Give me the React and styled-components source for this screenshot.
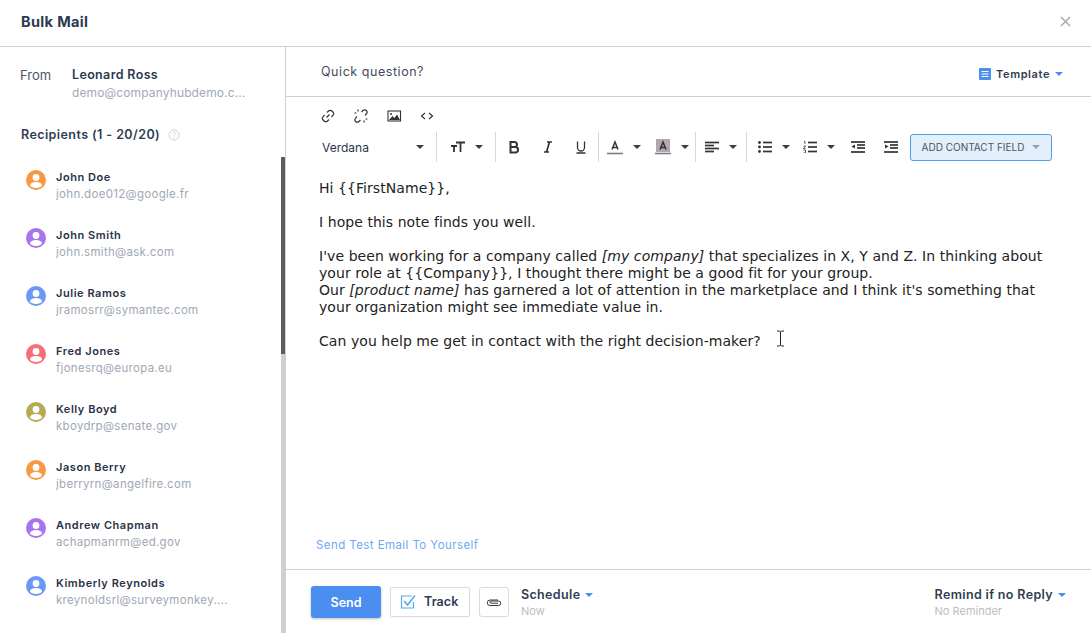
import React from 'react';
import styled, { createGlobalStyle } from 'styled-components';

const Global = createGlobalStyle`
  html, body { margin: 0; padding: 0; background: #fff; height: 100%; overflow: hidden; }
  * { box-sizing: border-box; }
  body { font-family: "Open Sans", "Liberation Sans", sans-serif; color: #2d3a52; }
`;
const Page = styled.div`width: 1091px; height: 633px; display: flex; flex-direction: column; overflow: hidden;`;
const Header = styled.header`
  height: 47px; flex: none; border-bottom: 1px solid #c9d1da; display: flex; align-items: center;
  justify-content: space-between; padding: 0 20px 3px 21px;
`;
const Title = styled.h1`margin: 0; font: 700 14.5px "Inter", sans-serif; color: #2c3a50; letter-spacing: 0.35px;`;
const Close = styled.button`border: 0; background: none; padding: 0; display: flex; color: #a4abb5;`;
const Body = styled.div`flex: 1; display: flex; min-height: 0;`;
const Side = styled.aside`
  width: 286px; flex: none; border-right: 1px solid #c9d1da; position: relative; overflow: hidden;
  padding: 20px 0 0 20px;
`;
const FromRow = styled.div`display: flex; margin-bottom: 25px;`;
const FromLabel = styled.div`width: 52px; font: 400 13px/16px "Inter", sans-serif; color: #4a5565;`;
const NameBlock = styled.div`display: flex; flex-direction: column;`;
const FromName = styled.div`font: 600 12.5px/16px "Inter", sans-serif; color: #2c3a50; letter-spacing: 0.35px;`;
const FromMail = styled.div`font: 400 12px/18px "Inter", sans-serif; color: #a1a9b6; margin-top: 1px; letter-spacing: 0.13px;`;
const RecHead = styled.div`
  display: flex; align-items: center; gap: 8px; padding-left: 1px; margin-bottom: 25px;
  font: 600 12.5px/16px "Inter", sans-serif; color: #2f3c54; letter-spacing: 0.42px;
`;
const List = styled.div`display: flex; flex-direction: column; gap: 22px; padding-left: 6px;`;
const Row = styled.div`display: flex; gap: 10px; height: 36px;`;
const Avatar = styled.div`width: 20px; height: 20px; margin-top: 2px; flex: none; display: flex;`;
const RName = styled.div`font: 600 11px/16px "Inter", sans-serif; color: #2a3346; padding-top: 1px; letter-spacing: 0.55px;`;
const RMail = styled.div`font: 400 11.5px/16px "Inter", sans-serif; color: #a0a8b5; margin-top: 1px; letter-spacing: 0.3px;`;
const ScrollTrack = styled.div`position: absolute; right: 0; top: 110px; bottom: 0; width: 4px; background: #cfcfcf;`;
const Thumb = styled.div`width: 4px; height: 197px; background: #5f5c5f;`;
const Main = styled.main`flex: 1; min-width: 0; display: flex; flex-direction: column;`;
const Subject = styled.div`
  height: 50px; flex: none; border-bottom: 1px solid #c9d1da; display: flex; align-items: center;
  justify-content: space-between; padding: 0 28px 0 35px;
`;
const SubjectText = styled.div`font: 400 12.5px "Inter", sans-serif; color: #3f4a5c; margin-top: -1px; letter-spacing: 0.55px;`;
const Template = styled.div`
  display: flex; align-items: center; gap: 5px; font: 600 11px "Inter", sans-serif; color: #2f3c54; margin-top: 4px; letter-spacing: 0.6px;
`;
const Caret = styled.span`
  display: inline-block; width: 0; height: 0; border-left: ${p => p.$s || 4}px solid transparent;
  border-right: ${p => p.$s || 4}px solid transparent; border-top: ${p => p.$s || 4}px solid ${p => p.$c || '#3c3c3c'};
`;
const Tools = styled.div`padding: 9px 0 0 34px; flex: none;`;
const ToolRow = styled.div`display: flex; align-items: center; height: 19px; gap: 17px;`;
const FormatRow = styled.div`display: flex; align-items: center; height: 30px; margin: 7px 0 0 -1px;`;
const FontPick = styled.div`
  width: 117px; display: flex; justify-content: space-between; align-items: center; padding: 0 12px 0 3px;
  font: 400 12px "Inter", sans-serif; color: #2b3548;
`;
const Sep = styled.div`width: 1px; height: 30px; background: #d8d8d8; flex: none;`;
const Btn = styled.div`
  width: ${p => p.$w}px; flex: none; display: flex; align-items: center; justify-content: center; gap: ${p => p.$g ?? 10}px;
  color: #333;
`;
const AddField = styled.button`
  margin-left: 7px; width: 142px; height: 27px; border: 1px solid #4d9fe6; border-radius: 3px; background: #e3f0fb;
  display: flex; align-items: center; justify-content: center; gap: 8px; padding: 0;
  font: 400 10px "Inter", sans-serif; color: #4a5462;
`;
const Editor = styled.div`
  flex: 1; padding: 18px 35px 0 33px; font: 14px/17px "DejaVu Sans", Verdana, sans-serif; color: #222; position: relative;
  letter-spacing: 0.06px;
  p { margin: 0 0 17px; }
`;
const Cursor = styled.svg`position: absolute; left: 490px; top: 168px;`;
const TestLink = styled.a`
  flex: none; padding: 0 0 16px 30px; font: 400 11.5px/16px "Inter", sans-serif; color: #71a8f2; letter-spacing: 0.42px;
`;
const Footer = styled.footer`
  height: 64px; flex: none; border-top: 1px solid #c9d1da; display: flex; align-items: center; padding: 0 25px;
`;
const Send = styled.button`
  width: 70px; height: 32px; border: 0; border-radius: 3px; background: #4a8ff0; color: #fff; font: 600 12.5px "Inter", sans-serif;
  box-shadow: 0 1px 3px rgba(0,0,0,.25); margin-top: 1px;
`;
const TrackBtn = styled.button`
  width: 80px; height: 30px; margin-left: 9px; border: 1px solid #d7dbe1; border-radius: 2px; background: #fff; display: flex;
  align-items: center; gap: 8px; padding: 0 0 0 9px; font: 600 12.5px "Inter", sans-serif; color: #2f3c54; letter-spacing: 0.1px;
`;
const Clip = styled.button`
  width: 30px; height: 30px; margin-left: 9px; border: 1px solid #d7dbe1; border-radius: 3px; background: #fff; display: flex;
  align-items: center; justify-content: center; padding: 0;
`;
const Stack = styled.div`display: flex; flex-direction: column; margin-left: ${p => p.$ml || 0}px; margin-top: 1px;`;
const StackTitle = styled.div`display: flex; align-items: center; gap: 5px; font: 600 12.5px/18px "Inter", sans-serif; color: #2f3c54; letter-spacing: 0.35px;`;
const StackSub = styled.div`font: 400 11px/15px "Inter", sans-serif; color: #b9bdc3;`;
const Spacer = styled.div`flex: 1;`;

const people = [
  ['John Doe', 'john.doe012@google.fr', '#f59a42'],
  ['John Smith', 'john.smith@ask.com', '#a874ee'],
  ['Julie Ramos', 'jramosrr@symantec.com', '#6b97f5'],
  ['Fred Jones', 'fjonesrq@europa.eu', '#f56f7b'],
  ['Kelly Boyd', 'kboydrp@senate.gov', '#b5ac52'],
  ['Jason Berry', 'jberryrn@angelfire.com', '#f59a42'],
  ['Andrew Chapman', 'achapmanrm@ed.gov', '#a874ee'],
  ['Kimberly Reynolds', 'kreynoldsrl@surveymonkey....', '#6b97f5'],
];

const Person = ({ c }) => (
  <svg width="20" height="20" viewBox="0 0 20 20">
    <circle cx="10" cy="10" r="10" fill={c} />
    <circle cx="10" cy="7.5" r="3.4" fill="#fff" />
    <ellipse cx="10" cy="15" rx="6" ry="3" fill="#fff" />
  </svg>
);
const I = ({ children, w = 16, h = 16, vb }) => (
  <svg width={w} height={h} viewBox={vb || `0 0 ${w} ${h}`} fill="none" stroke="#333" strokeWidth="1.2">{children}</svg>
);
const Lines = ({ ys, x1, x2 }) => ys.map((y, i) => <line key={y} x1={x1[i % x1.length]} x2={x2[i % x2.length]} y1={y} y2={y} strokeWidth="1.7" />);

export default function App() {
  return (
    <Page>
      <Global />
      <Header>
        <Title>Bulk Mail</Title>
        <Close aria-label="close">
          <svg width="11" height="11" viewBox="0 0 11 11" stroke="currentColor" strokeWidth="1.5"><path d="M1 1l9 9M10 1l-9 9" /></svg>
        </Close>
      </Header>
      <Body>
        <Side>
          <FromRow>
            <FromLabel>From</FromLabel>
            <NameBlock>
              <FromName>Leonard Ross</FromName>
              <FromMail>demo@companyhubdemo.c...</FromMail>
            </NameBlock>
          </FromRow>
          <RecHead>
            Recipients (1 - 20/20)
            <svg width="12" height="12" viewBox="0 0 12 12" fill="none" stroke="#cfd6dd"><circle cx="6" cy="6" r="5" /><path d="M4.5 4.8c0-2 3-2 3-.2 0 1.1-1.5 1.2-1.5 2.4M6 8v1" /></svg>
          </RecHead>
          <List>
            {people.map(([n, m, c]) => (
              <Row key={n}>
                <Avatar><Person c={c} /></Avatar>
                <NameBlock>
                  <RName>{n}</RName>
                  <RMail>{m}</RMail>
                </NameBlock>
              </Row>
            ))}
          </List>
          <ScrollTrack><Thumb /></ScrollTrack>
        </Side>
        <Main>
          <Subject>
            <SubjectText>Quick question?</SubjectText>
            <Template>
              <svg width="12" height="12" viewBox="0 0 12 12"><rect width="12" height="12" rx="1" fill="#4a8ff0" /><path d="M2.5 3.5h7M2.5 6h7M2.5 8.5h7" stroke="#fff" strokeWidth="1" /></svg>
              Template
              <Caret $c="#4a8ff0" />
            </Template>
          </Subject>
          <Tools>
            <ToolRow>
              <I w={16} h={16}><path d="M6.5 9.5l3-3M7 4.5l1.5-1.5a2.4 2.4 0 0 1 3.4 0l1 1a2.4 2.4 0 0 1 0 3.4L11.5 9M9 11.5L7.5 13a2.4 2.4 0 0 1-3.4 0l-1-1a2.4 2.4 0 0 1 0-3.4L4.5 7" /></I>
              <I w={16} h={16}><path d="M8.5 4l1.5-1.500a2.4 2.4 0 0 1 3.4 0 2.4 2.4 0 0 1 0 3.4L12 7.500M7.500 12L6 13.500a2.4 2.4 0 0 1-3.4 0 2.4 2.4 0 0 1 0-3.4L4 8.500M1.500 5h2M5 1.500v2M14.500 11h-2M11 14.500v-2" /></I>
              <I w={16} h={16}><rect x="2" y="3" width="12.500" height="10" strokeWidth="1.100" /><path d="M3 12l3.500-4 2 2 2.500-3.500 3 5.500z" fill="#333" stroke="none" /><circle cx="5" cy="6" r="1" fill="#333" stroke="none" /></I>
              <I w={16} h={16}><path d="M6 5l-3.500 3 3.500 3M10 5l3.500 3-3.500 3" /></I>
            </ToolRow>
            <FormatRow>
              <FontPick>Verdana<Caret /></FontPick>
              <Sep />
              <Btn $w={58} $g={9}>
                <I w={16} h={14}><path d="M1 6h6M4 6v6M6 2.500h9M10.500 2.500v9.500" strokeWidth="1.800" /></I>
                <Caret />
              </Btn>
              <Sep />
              <Btn $w={35} $g={0}><I w={14} h={14}><path d="M3.500 2h4a2.500 2.500 0 0 1 0 5h-4zM3.500 7h4.800a2.600 2.600 0 0 1 0 5.500H3.500z" strokeWidth="2" /></I></Btn>
              <Btn $w={33} $g={0}><I w={14} h={14}><path d="M6 2h5M3 12h5M8.500 2l-3 10" strokeWidth="1.700" /></I></Btn>
              <Btn $w={34} $g={0}><I w={14} h={14}><path d="M3.500 1.500v6a3.500 3.500 0 0 0 7 0v-6M2.500 13h9" strokeWidth="1.300" /></I></Btn>
              <Sep />
              <Btn $w={49}>
                <I w={16} h={16}><path d="M5 10.500l3-7.500 3 7.500M6 8.500h4" strokeWidth="1.500" /><line x1="0" x2="16" y1="14.500" y2="14.500" stroke="#7c7c85" strokeWidth="1.600" /></I>
                <Caret />
              </Btn>
              <Btn $w={47}>
                <I w={16} h={16}><rect x="1" y="0" width="14" height="13" fill="#b4a6b0" stroke="none" /><path d="M5 10.500l3-7.500 3 7.500M6 8.500h4" strokeWidth="1.500" /><line x1="0" x2="16" y1="14.500" y2="14.500" stroke="#7c7c85" strokeWidth="1.600" /></I>
                <Caret />
              </Btn>
              <Sep />
              <Btn $w={50}>
                <I w={14} h={12}><Lines ys={[1.500, 4.500, 7.500, 10.500]} x1={[0]} x2={[14, 9]} /></I>
                <Caret />
              </Btn>
              <Sep />
              <Btn $w={53}>
                <I w={14} h={12}>
                  <Lines ys={[1.500, 6, 10.500]} x1={[5]} x2={[14]} />
                  <circle cx="1.500" cy="1.500" r="1.400" fill="#333" stroke="none" /><circle cx="1.500" cy="6" r="1.400" fill="#333" stroke="none" /><circle cx="1.500" cy="10.500" r="1.400" fill="#333" stroke="none" />
                </I>
                <Caret />
              </Btn>
              <Btn $w={37}>
                <I w={14} h={12}>
                  <Lines ys={[1.500, 6, 10.500]} x1={[5]} x2={[14]} />
                  <path d="M1 .500h1v2.500M.500 5h2L.500 7.500h2M.500 9h2v3h-2" strokeWidth=".8" />
                </I>
                <Caret />
              </Btn>
              <Btn $w={41}>
                <I w={14} h={12}><Lines ys={[1, 4, 7, 11]} x1={[0, 6, 6, 0]} x2={[14]} /><path d="M4 3.500L0.500 5.500 4 7.500z" fill="#333" stroke="none" /></I>
              </Btn>
              <Btn $w={25}>
                <I w={14} h={12}><Lines ys={[1, 4, 7, 11]} x1={[0, 6, 6, 0]} x2={[14]} /><path d="M1 3.500L4.500 5.500 1 7.500z" fill="#333" stroke="none" /></I>
              </Btn>
              <AddField>ADD CONTACT FIELD<Caret $c="#8ea3bb" /></AddField>
            </FormatRow>
          </Tools>
          <Editor>
            <p>Hi {'{{FirstName}}'},</p>
            <p>I hope this note finds you well.</p>
            <p>
              I've been working for a company called <em>[my company]</em> that specializes in X, Y and Z. In thinking about your role at {'{{Company}}'}, I thought there might be a good fit for your group.<br />
              Our <em>[product name]</em> has garnered a lot of attention in the marketplace and I think it's something that your organization might see immediate value in.
            </p>
            <p>Can you help me get in contact with the right decision-maker?</p>
            <Cursor width="9" height="17" viewBox="0 0 9 17" fill="none" stroke="#222"><path d="M1 1h2.500l1 1 1-1H8M4.500 2v13M1 16h2.500l1-1 1 1H8" /></Cursor>
          </Editor>
          <TestLink>Send Test Email To Yourself</TestLink>
          <Footer>
            <Send>Send</Send>
            <TrackBtn>
              <svg width="16" height="16" viewBox="0 0 16 16" fill="none"><path d="M13.500 8v6H1.500V2h10" stroke="#5aa7e8" strokeWidth="1.200" /><path d="M4 7l3.500 4L15 1.500" stroke="#5aa7e8" strokeWidth="1.600" /></svg>
              Track
            </TrackBtn>
            <Clip aria-label="attach">
              <svg width="16" height="10" viewBox="0 0 16 10" fill="none" stroke="#3b3b3b" strokeWidth="1"><path d="M12 3H4a2.500 2.500 0 0 0 0 5.500h8.500a2 2 0 0 0 0-4.500H5a1 1 0 0 0 0 2.200h7" /></svg>
            </Clip>
            <Stack $ml={12}>
              <StackTitle>Schedule <Caret $c="#4a8ff0" /></StackTitle>
              <StackSub>Now</StackSub>
            </Stack>
            <Spacer />
            <Stack>
              <StackTitle>Remind if no Reply <Caret $c="#4a8ff0" /></StackTitle>
              <StackSub>No Reminder</StackSub>
            </Stack>
          </Footer>
        </Main>
      </Body>
    </Page>
  );
}
